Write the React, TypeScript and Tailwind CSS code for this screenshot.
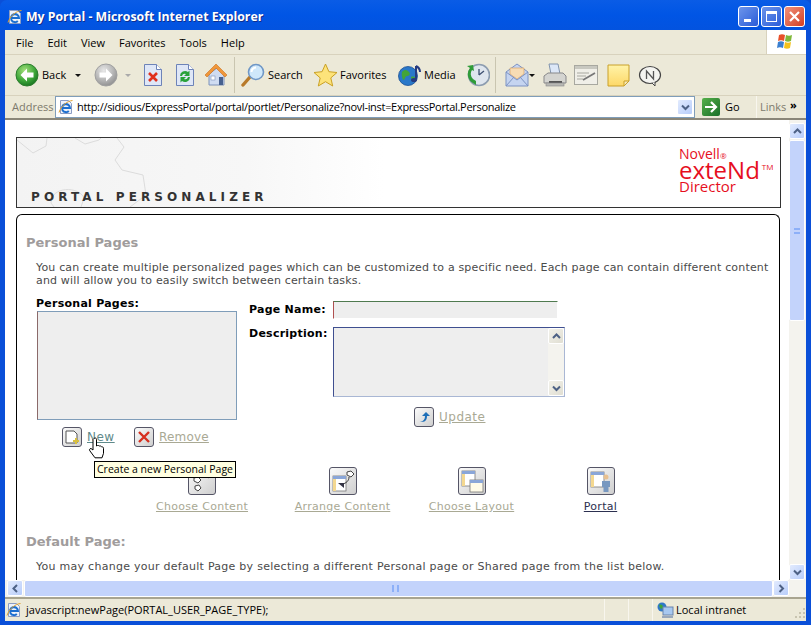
const ui = "font-['Open_Sans',sans-serif]"

const Svg = ({ w, h = w, children }: { w: number; h?: number; children: React.ReactNode }) => (
  <svg width={w} height={h} viewBox={`0 0 ${w} ${h}`} className="block shrink-0">{children}</svg>
)

const IeLogo = ({ size = 16 }: { size?: number }) => (
  <svg width={size} height={size} viewBox="0 0 16 16" className="block shrink-0">
    <path d="M2.500 1.500h8l3 3v10h-11z" fill="#eef2fa" stroke="#8a9cc4" />
    <path d="M4.500 9h7.500a4 4 0 1 0-1.200 3" fill="none" stroke="#1c6fd0" strokeWidth="2" />
    <path d="M1 13.500C3 7 9 2 14.500 1.500" fill="none" stroke="#e0a030" strokeWidth="1" />
  </svg>
)

const NavCircle = ({ dir, green }: { dir: "l" | "r"; green: boolean }) => (
  <Svg w={24}>
    <defs>
      <radialGradient id={`nav${dir}`} cx="40%" cy="30%" r="75%">
        <stop offset="0" stopColor={green ? "#a5e07c" : "#e8e8e8"} />
        <stop offset="0.6" stopColor={green ? "#3fa83a" : "#b4b4b4"} />
        <stop offset="1" stopColor={green ? "#146f1e" : "#8c8c8c"} />
      </radialGradient>
    </defs>
    <circle cx="12" cy="12" r="11" fill={`url(#nav${dir})`} stroke={green ? "#2d7d2d" : "#a0a0a0"} />
    <path d={dir === "l" ? "M12 5.500 5.500 12l6.500 6.500v-4h6.500v-5H12z" : "M12 5.500l6.500 6.500-6.500 6.500v-4H5.500v-5H12z"} fill="#fff" />
  </Svg>
)

const DropArrow = ({ light }: { light?: boolean }) => (
  <svg width="6" height="3" viewBox="0 0 6 3" className="block shrink-0"><path d="M0 0h6L3 3z" fill={light ? "#aaa" : "#111"} /></svg>
)

const StopIcon = () => (
  <Svg w={20} h={24}>
    <path d="M1.500 1.500h12l5 5v16h-17z" fill="#dfe7f7" stroke="#6d83b8" />
    <path d="M13.500 1.500v5h5" fill="#fff" stroke="#6d83b8" />
    <path d="M6 10l8 8M14 10l-8 8" stroke="#e0301e" strokeWidth="2.600" />
  </Svg>
)

const RefreshIcon = () => (
  <Svg w={20} h={24}>
    <path d="M1.500 1.500h12l5 5v16h-17z" fill="#dfe7f7" stroke="#6d83b8" />
    <path d="M13.500 1.500v5h5" fill="#fff" stroke="#6d83b8" />
    <path d="M5 13a5 5 0 0 1 8-4l1.500-1.500V13H9l2-2a3 3 0 0 0-4 2z" fill="#29a23a" />
    <path d="M15 14a5 5 0 0 1-8 4l-1.500 1.500V14H11l-2 2a3 3 0 0 0 4-2z" fill="#29a23a" />
  </Svg>
)

const HomeIcon = () => (
  <Svg w={24}>
    <path d="M5 11v11h15V11l-7-6z" fill="#cfdcf2" stroke="#7d92ba" />
    <path d="M1 12 12 1l11 11-2 2L12 5l-9 9z" fill="#f0973a" stroke="#c96f1d" strokeWidth="0.600" />
    <rect x="15" y="14" width="4" height="8" fill="#46608f" />
    <rect x="7" y="13" width="4" height="4" fill="#fff" stroke="#7d92ba" strokeWidth="0.600" />
  </Svg>
)

const SearchIcon = () => (
  <Svg w={25}>
    <path d="M9 14 2 22" stroke="#b87a2a" strokeWidth="3.400" strokeLinecap="round" />
    <circle cx="15" cy="9" r="7.500" fill="#cfe8fb" stroke="#6f97c6" strokeWidth="1.600" />
    <path d="M10.500 9a4.500 4.500 0 0 1 4.500-4.500" fill="none" stroke="#fff" strokeWidth="2" />
  </Svg>
)

const StarIcon = () => (
  <Svg w={25}>
    <path d="M12.500 1l3.400 7.700 8.100.800-6.200 5.400 1.900 8.100-7.200-4.300-7.200 4.300 1.900-8.100L1 9.500l8.100-.800z" fill="#fde37a" stroke="#caa125" />
  </Svg>
)

const MediaIcon = () => (
  <Svg w={24}>
    <circle cx="10" cy="13" r="9.500" fill="#2a78c9" stroke="#1b4f94" strokeWidth="0.800" />
    <path d="M4 9c3-3 5-2 7 0s0 4-2 4-2 3-3 4-3-5-2-8zM13 14c2-1 4 0 5 1-1 3-3 4-4 3z" fill="#43a53a" />
    <path d="M18 3v13" stroke="#253a80" strokeWidth="2" />
    <path d="M18 3c2 1 4 3 4 6" fill="none" stroke="#253a80" strokeWidth="2" />
    <ellipse cx="16" cy="17" rx="3" ry="2" fill="#253a80" />
  </Svg>
)

const HistoryIcon = () => (
  <Svg w={24}>
    <circle cx="13" cy="12" r="10.500" fill="#dfe6ee" stroke="#8d9db0" strokeWidth="1.600" />
    <path d="M13 12l5-4M13 12V6" stroke="#3d4f70" strokeWidth="1.300" />
    <path d="M4 5a10 10 0 0 0 3 15l3 2v-4l-3-2a7 7 0 0 1-1-9l2 1-1-6-6 1z" fill="#2f9c38" />
  </Svg>
)

const MailIcon = () => (
  <Svg w={24}>
    <path d="M1 9 12 1l11 8v14H1z" fill="#c5d4f0" stroke="#7d93c2" />
    <path d="M5 11V5h14v6l-7 5z" fill="#f7dcb4" stroke="#d49a5a" strokeWidth="0.600" />
    <path d="M1 9l11 8 11-8M1 23l8-9M23 23l-8-9" fill="none" stroke="#7d93c2" />
  </Svg>
)

const PrintIcon = () => (
  <Svg w={24}>
    <path d="M6 1h9l2 10H8z" fill="#dce7f7" stroke="#8294ad" />
    <path d="M1 13l4-3h15l3 3v7H1z" fill="#d4d4d0" stroke="#88888a" />
    <rect x="6" y="18" width="13" height="4" fill="#555" />
    <rect x="3" y="20" width="18" height="3" fill="#b8b8b4" stroke="#88888a" strokeWidth="0.600" />
  </Svg>
)

const EditIcon = () => (
  <Svg w={24} h={20}>
    <rect x="0.500" y="0.500" width="23" height="19" fill="#f0efe8" stroke="#a8a8a0" />
    <rect x="1" y="1" width="22" height="3" fill="#c8c8c0" />
    <path d="M3 8h12M3 11h9M3 14h6" stroke="#a8a8a0" />
    <path d="M9 15 21 8" stroke="#777" strokeWidth="1.800" />
  </Svg>
)

const NoteIcon = () => (
  <Svg w={23}>
    <defs>
      <linearGradient id="note" x1="0" y1="0" x2="0" y2="1">
        <stop offset="0" stopColor="#fff3a8" />
        <stop offset="1" stopColor="#fdd868" />
      </linearGradient>
    </defs>
    <path d="M1 1h21v16l-5 5H1z" fill="url(#note)" stroke="#c9a02a" />
    <path d="M22 17h-5v5z" fill="#f6e9b8" stroke="#c9a02a" />
  </Svg>
)

const MessengerIcon = () => (
  <Svg w={24} h={21}>
    <ellipse cx="12" cy="10" rx="10.500" ry="8.500" fill="#f4f4f0" stroke="#444" strokeWidth="1.200" />
    <path d="M14 18l3 3 0-4" fill="#f4f4f0" stroke="#444" />
    <path d="M8.500 14V6l7 8V6" fill="none" stroke="#555" strokeWidth="1.300" />
  </Svg>
)

const WinFlag = () => (
  <Svg w={22} h={20}>
    <path d="M3 3c2-1 4-1 6 0L8 9C6 8 4 8 2 9z" fill="#e8502a" />
    <path d="M10 3c2 1 4 1 6 0l-1 6c-2 1-4 1-6 0z" fill="#7fb83a" />
    <path d="M2 10c2-1 4-1 6 0l-1 6c-2-1-4-1-6 0z" fill="#3a7fd0" />
    <path d="M9 10c2 1 4 1 6 0l-1 6c-2 1-4 1-6 0z" fill="#f4c21c" />
  </Svg>
)

const ScrollBtn = ({ d, className = "" }: { d: string; className?: string }) => (
  <div className={`w-[16px] h-[16px] shrink-0 rounded-[2px] border border-white bg-gradient-to-br from-[#e2ebfe] to-[#b8cdfa] flex items-center justify-center ${className}`}>
    <svg width="9" height="9" viewBox="0 0 9 9"><path d={d} fill="none" stroke="#4d6185" strokeWidth="2" /></svg>
  </div>
)

const ToolBtn = ({ icon, label, labelWidth, className = "" }: { icon: React.ReactNode; label: string; labelWidth: string; className?: string }) => (
  <div className={`flex items-center gap-[2px] shrink-0 ${className}`}>
    {icon}
    <span className={`text-[11px] text-black whitespace-nowrap ${labelWidth}`}>{label}</span>
  </div>
)

const AppBtn = ({ children, size = 20 }: { children: React.ReactNode; size?: number }) => (
  <div
    className="shrink-0 rounded-[3px] border border-[#555566] bg-gradient-to-br from-[#fbfbfb] to-[#cfcfcf] flex items-center justify-center"
    style={{ width: size, height: size }}
  >
    {children}
  </div>
)

const ActionLink = ({ icon, label, dark, className = "" }: { icon: React.ReactNode; label: string; dark?: boolean; className?: string }) => (
  <div className={`flex flex-col items-center ${className}`}>
    <AppBtn size={28}>{icon}</AppBtn>
    <span className={`mt-[5px] underline text-[11px] tracking-[0.3px] leading-[14px] whitespace-nowrap ${dark ? "text-[#2c3050]" : "text-[#a9a994]"}`}>{label}</span>
  </div>
)

const WindowGlyph = () => (
  <>
    <rect x="1" y="1" width="13" height="15" fill="#fff" stroke="#777" strokeWidth="0.800" />
    <rect x="1" y="1" width="13" height="3" fill="#8aa6d8" />
    <rect x="1" y="4" width="3" height="12" fill="#f4d890" />
  </>
)

export default function App() {
  return (
    <div className={`w-[811px] h-[625px] overflow-hidden flex flex-col bg-[#0a4fd8] ${ui}`}>
      {/* title bar */}
      <div className="h-[30px] shrink-0 flex items-center pt-[3px] pl-[7px] pr-[6px] gap-[3px] rounded-t-[7px] bg-gradient-to-b from-[#0a5ce6] via-[#0055e5] to-[#0353df]">
        <IeLogo />
        <span className="mt-[2px] text-[12.300px] font-bold text-white [text-shadow:1px_1px_#0f2f8f] leading-none">My Portal - Microsoft Internet Explorer</span>
        <div className="ml-auto flex gap-[2px]">
          <div className="w-[21px] h-[21px] rounded-[3px] border border-white bg-gradient-to-br from-[#6d94ea] to-[#2a5bd8] flex items-end pl-[5px] pb-[4px]">
            <div className="w-[7px] h-[3px] bg-white" />
          </div>
          <div className="w-[21px] h-[21px] rounded-[3px] border border-white bg-gradient-to-br from-[#6d94ea] to-[#2a5bd8] flex items-center justify-center">
            <div className="w-[11px] h-[11px] border border-white border-t-[3px]" />
          </div>
          <div className="w-[21px] h-[21px] rounded-[3px] border border-white bg-gradient-to-br from-[#f0907a] to-[#d23c1e] flex items-center justify-center">
            <svg width="11" height="11" viewBox="0 0 11 11"><path d="M1 1l9 9M10 1l-9 9" stroke="#fff" strokeWidth="2.200" /></svg>
          </div>
        </div>
      </div>

      <div className="flex-1 min-h-0 ml-[5px] mr-[5px] flex flex-col bg-[#ece9d8]">
        {/* menu */}
        <div className="h-[25px] shrink-0 flex border-b border-[#d8d2bd]">
          <div className="flex-1 flex items-center pl-[11px] pt-[2px] gap-[14px] text-[11px] text-black">
            <span>File</span>
            <span>Edit</span>
            <span>View</span>
            <span>Favorites</span>
            <span>Tools</span>
            <span>Help</span>
          </div>
          <div className="w-[40px] bg-white border-l border-[#d8d2bd] flex items-center justify-center">
            <WinFlag />
          </div>
        </div>

        {/* toolbar */}
        <div className="h-[41px] shrink-0 flex items-center pl-[10px] border-b border-[#d8d2bd]">
          <ToolBtn icon={<NavCircle dir="l" green />} label="Back" labelWidth="w-[25px] ml-px" />
          <div className="ml-[8px]"><DropArrow /></div>
          <div className="ml-[13px]"><NavCircle dir="r" green={false} /></div>
          <div className="ml-[7px]"><DropArrow light /></div>
          <div className="ml-[12px]"><StopIcon /></div>
          <div className="ml-[12px]"><RefreshIcon /></div>
          <div className="ml-[9px]"><HomeIcon /></div>
          <div className="ml-[6px] w-px h-[36px] bg-[#c9c5b0]" />
          <ToolBtn icon={<SearchIcon />} label="Search" labelWidth="w-[34px]" className="ml-[6px]" />
          <ToolBtn icon={<StarIcon />} label="Favorites" labelWidth="w-[46px]" className="ml-[11px]" />
          <ToolBtn icon={<MediaIcon />} label="Media" labelWidth="w-[29px]" className="ml-[12px]" />
          <div className="ml-[13px]"><HistoryIcon /></div>
          <div className="ml-[5px] w-px h-[36px] bg-[#c9c5b0]" />
          <div className="ml-[9px]"><MailIcon /></div>
          <DropArrow />
          <div className="ml-[8px]"><PrintIcon /></div>
          <div className="ml-[7px]"><EditIcon /></div>
          <div className="ml-[9px]"><NoteIcon /></div>
          <div className="ml-[8px]"><MessengerIcon /></div>
        </div>

        {/* address bar */}
        <div className="h-[24px] shrink-0 flex items-center pl-[7px] border-b-2 border-[#8a8678]">
          <span className="text-[11px] text-[#7d7a6c] w-[43px]">Address</span>
          <div className="w-[640px] h-[22px] bg-white border border-[#7f9db9] flex items-center pl-[2px] pr-[1px]">
            <IeLogo />
            <span className="ml-[3px] flex-1 text-[11px] tracking-[-0.3px] text-black whitespace-nowrap overflow-hidden">http://sidious/ExpressPortal/portal/portlet/Personalize?novl-inst=ExpressPortal.Personalize</span>
            <ScrollBtn d="M1 2.500 4.500 6 8 2.500" />
          </div>
          <div className="ml-[7px] w-[18px] h-[18px] rounded-[2px] bg-gradient-to-br from-[#55b04a] to-[#18702a] flex items-center justify-center">
            <svg width="14" height="12" viewBox="0 0 14 12"><path d="M1 6h11M7 1l5 5-5 5" fill="none" stroke="#fff" strokeWidth="2.200" /></svg>
          </div>
          <span className="ml-[5px] w-[31px] text-[11px] text-black">Go</span>
          <div className="w-px h-[22px] bg-[#f8f6ee]" />
          <span className="ml-[3px] w-[24px] text-[11px] text-[#7d7a6c]">Links</span>
          <span className="ml-[6px] mb-[6px] text-[11px] leading-none font-bold text-black">»</span>
        </div>

        {/* page area */}
        <div className="flex-1 min-h-0 flex flex-col bg-white">
          <div className="flex-1 min-h-0 flex">
            <div className="relative flex-1 min-w-0 overflow-hidden pl-[11px] pt-[17px] font-['DejaVu_Sans',sans-serif] text-[11px] text-[#4a4a4a]">
              {/* banner */}
              <div className="relative w-[765px] h-[71px] border border-[#333] flex justify-between bg-gradient-to-r from-[#f3f3f3] via-[#f7f7f7] via-30% to-white to-48%">
                <svg width="160" height="69" viewBox="0 0 160 69" className="absolute left-0 top-0">
                  <g fill="none" stroke="#dcdcdc">
                    <path d="M0 2 16 15 29 8 30 0" />
                    <path d="M58 0 68 6 82 2 84 0" />
                    <path d="M100 0 107 9 98 22 105 32 126 37 129 57 113 69" />
                    <path d="M37 69 34 65C34 48 62 48 67 60L64 69" />
                  </g>
                </svg>
                <div className="relative self-end pl-[14px] pb-[3px] text-[12px] font-bold tracking-[4.100px] text-[#333] leading-[14px]">PORTAL PERSONALIZER</div>
                <div className="w-[92px] mr-[9px] pt-[9px] text-[#e60f1e] font-['Open_Sans',sans-serif]">
                  <div className="text-[14px] leading-[14px] whitespace-nowrap">Novell<span className="text-[8px]">®</span></div>
                  <div className="text-[24px] leading-[13px] whitespace-nowrap">exteNd<span className="text-[8px] align-super leading-none ml-[2px]">TM</span></div>
                  <div className="text-[15px] leading-[21px]">Director</div>
                </div>
              </div>

              {/* card */}
              <div className="mt-[6px] w-[764px] h-[420px] rounded-t-[6px] border-x border-t border-black pl-[9px] pt-[20px]">
                <div className="text-[13px] font-bold text-[#a09c9c] leading-[16px]">Personal Pages</div>
                <p className="mt-[10px] ml-[10px] w-[745px] leading-[13px] tracking-[0.17px]">
                  You can create multiple personalized pages which can be customized to a specific need. Each page can contain different content and will allow you to easily switch between certain tasks.
                </p>

                <div className="mt-[10px] ml-[10px] flex">
                  <div className="w-[213px]">
                    <div className="font-bold text-black leading-[14px] tracking-[0.25px]">Personal Pages:</div>
                    <div className="ml-px w-[200px] h-[109px] border border-[#7f9db9] border-l-[#8b6a6a] bg-[#eeeeee]" />
                    <div className="mt-[7px] ml-[26px] flex items-center">
                      <AppBtn>
                        <svg width="16" height="16" viewBox="0 0 16 16">
                          <path d="M2 2h8l3 3v9H2z" fill="#fff" stroke="#555" />
                          <path d="M12 9v6M9 12h6" stroke="#d8c040" strokeWidth="2" />
                        </svg>
                      </AppBtn>
                      <span className="ml-[5px] w-[28px] underline text-[12px] tracking-[0.5px] text-[#5f8a8a]">New</span>
                      <div className="ml-[19px]">
                        <AppBtn>
                          <svg width="12" height="12" viewBox="0 0 12 12"><path d="M1 1l10 10M11 1 1 11" stroke="#d63020" strokeWidth="2.400" /></svg>
                        </AppBtn>
                      </div>
                      <span className="ml-[5px] underline text-[12px] tracking-[0.2px] text-[#a9a994]">Remove</span>
                    </div>
                  </div>

                  <div className="mt-[4px] flex flex-col">
                    <div className="flex items-center">
                      <span className="w-[84px] font-bold text-black tracking-[0.25px]">Page Name:</span>
                      <div className="w-[225px] h-[18px] bg-[#eeeeee] border-t border-l border-t-[#4f7a4f] border-l-[#b05050] border-r border-b border-r-white border-b-white" />
                    </div>
                    <div className="mt-[8px] flex items-start">
                      <span className="w-[84px] font-bold text-black tracking-[0.25px] leading-[14px]">Description:</span>
                      <div className="w-[232px] h-[70px] flex border border-[#a9b7d4] border-t-[#3f4f90] border-l-[#3f4f90] bg-[#eeeeee]">
                        <div className="flex-1" />
                        <div className="w-[16px] bg-[#f4f3ee] flex flex-col justify-between">
                          <ScrollBtn d="M1 6 4.500 2.500 8 6" className="!from-[#f2f1ea] !to-[#e0ded2]" />
                          <ScrollBtn d="M1 2.500 4.500 6 8 2.500" className="!from-[#f2f1ea] !to-[#e0ded2]" />
                        </div>
                      </div>
                    </div>
                    <div className="mt-[10px] ml-[165px] flex items-center">
                      <AppBtn>
                        <svg width="14" height="14" viewBox="0 0 14 14"><path d="M2 11c4 1 6-1 6-5H5l4-4 4 4h-3c0 5-3 7-8 5z" fill="#1d6fb8" /></svg>
                      </AppBtn>
                      <span className="ml-[5px] underline text-[12px] tracking-[0.5px] text-[#a9a994]">Update</span>
                    </div>
                  </div>
                </div>

                <div className="mt-[20px] flex">
                  <ActionLink
                    className="ml-[130px] w-[92px]"
                    label="Choose Content"
                    icon={
                      <svg width="24" height="24" viewBox="0 0 24 24">
                        <path d="M15 4l3-2 3 3-2 4-4-3zM4 9l4-1 3 3-3 3-4-2zM5 17l4-1 2 3-3 3-3-2z" fill="#fff" stroke="#444" />
                      </svg>
                    }
                  />
                  <ActionLink
                    className="ml-[47px] w-[95px]"
                    label="Arrange Content"
                    icon={
                      <svg width="24" height="24" viewBox="0 0 24 24">
                        <g transform="translate(1 6)"><WindowGlyph /></g>
                        <path d="M16 3l4-1 3 3-3 3-4-2z" fill="#fff" stroke="#444" />
                        <path d="M18 8c0 4-3 6-6 7" fill="none" stroke="#333" />
                        <path d="M7 14h6v5z" fill="#334" />
                      </svg>
                    }
                  />
                  <ActionLink
                    className="ml-[39px] w-[85px]"
                    label="Choose Layout"
                    icon={
                      <svg width="24" height="24" viewBox="0 0 24 24">
                        <g transform="translate(1 1)"><WindowGlyph /></g>
                        <rect x="10" y="11" width="13" height="12" fill="#fffbe8" stroke="#777" strokeWidth="0.800" />
                        <rect x="10" y="11" width="13" height="3" fill="#8aa6d8" />
                      </svg>
                    }
                  />
                  <ActionLink
                    className="ml-[70px] w-[33px]"
                    label="Portal"
                    dark
                    icon={
                      <svg width="24" height="24" viewBox="0 0 24 24">
                        <g transform="translate(1 2)"><WindowGlyph /></g>
                        <circle cx="17" cy="8" r="2.500" fill="#e8c090" />
                        <path d="M13 12h8v6h-1.500v5h-5v-5H13z" fill="#7898c0" />
                      </svg>
                    }
                  />
                </div>

                <div className="mt-[20px] text-[13px] font-bold text-[#a09c9c] leading-[16px]">Default Page:</div>
                <p className="mt-[10px] ml-[10px] w-[745px] leading-[13px] tracking-[0.27px]">
                  You may change your default Page by selecting a different Personal page or Shared page from the list below.
                </p>
              </div>

              {/* tooltip and cursor over the page */}
              <div className="absolute left-[89px] top-[341px] h-[17px] px-[2px] border border-black bg-[#ffffe1] text-[10.500px] text-black leading-[15px] whitespace-nowrap font-['Open_Sans',sans-serif]">Create a new Personal Page</div>
              <svg width="18" height="22" viewBox="0 0 18 22" className="absolute left-[83px] top-[317px]">
                <path d="M6 1.500c1-1 2.500-.500 2.500 1V9l1-.500c1-.300 1.500.300 2 .500 1-.300 1.700.200 2 .800 1-.300 2 .500 2 1.500v5l-1.500 4.500H7L2 14c-1-1.200-.500-2.500 1-2.500l2 1.500V2.500z" fill="#fff" stroke="#000" />
              </svg>
            </div>

            {/* vertical scrollbar */}
            <div className="w-[17px] shrink-0 flex flex-col bg-[#f4f3ee]">
              <ScrollBtn d="M1 6 4.500 2.500 8 6" className="mt-[3px]" />
              <div className="flex-1 flex flex-col">
                <div className="h-[181px] mt-[1px] w-[16px] rounded-[2px] border border-white bg-[#c3d3fb] flex items-center justify-center">
                  <div className="w-[6px] h-[6px] border-y-2 border-[#8db0f8]" />
                </div>
              </div>
              <ScrollBtn d="M1 2.500 4.500 6 8 2.500" />
            </div>
          </div>

          {/* horizontal scrollbar */}
          <div className="h-[17px] shrink-0 flex bg-[#f4f3ee]">
            <ScrollBtn d="M6 1 2.500 4.500 6 8" className="ml-[2px]" />
            <div className="flex-1 ml-[1px] rounded-[2px] border border-white bg-[#c3d3fb] flex items-center justify-center">
              <div className="w-[7px] h-[7px] border-x-2 border-[#8db0f8] mr-[6px]" />
            </div>
            <ScrollBtn d="M2.500 1 6 4.500 2.500 8" />
            <div className="w-[17px]" />
          </div>
        </div>

        {/* status bar */}
        <div className="h-[24px] shrink-0 border-t-2 border-[#a8a490] flex items-center pl-[1px] text-[11px] text-black">
          <IeLogo />
          <span className="ml-[4px] flex-1">javascript:newPage(PORTAL_USER_PAGE_TYPE);</span>
          <div className="h-full w-[24px] border-l border-[#f8f6ee]" />
          <div className="h-full w-[24px] border-l border-[#f8f6ee]" />
          <div className="h-full w-[154px] border-l border-[#f8f6ee] flex items-center pl-[4px] gap-[2px]">
            <svg width="17" height="17" viewBox="0 0 17 17" className="shrink-0">
              <circle cx="5" cy="5" r="4.500" fill="#2f78c8" />
              <path d="M2 3c2-1 4 0 4 2s-2 2-3 1z" fill="#3fa53a" />
              <rect x="6" y="5" width="10" height="8" fill="#a8c8f0" stroke="#6a84ab" />
              <rect x="5" y="14" width="11" height="2" fill="#9aa8bb" />
            </svg>
            <span>Local intranet</span>
            <svg width="11" height="11" viewBox="0 0 11 11" className="ml-auto self-end mb-[3px] mr-[1px]">
              <path d="M9 1h2v2H9zM5 5h2v2H5zM9 5h2v2H9zM1 9h2v2H1zM5 9h2v2H5zM9 9h2v2H9z" fill="#c8c4b0" />
            </svg>
          </div>
        </div>
      </div>
      <div className="h-[4px] shrink-0" />
    </div>
  )
}
